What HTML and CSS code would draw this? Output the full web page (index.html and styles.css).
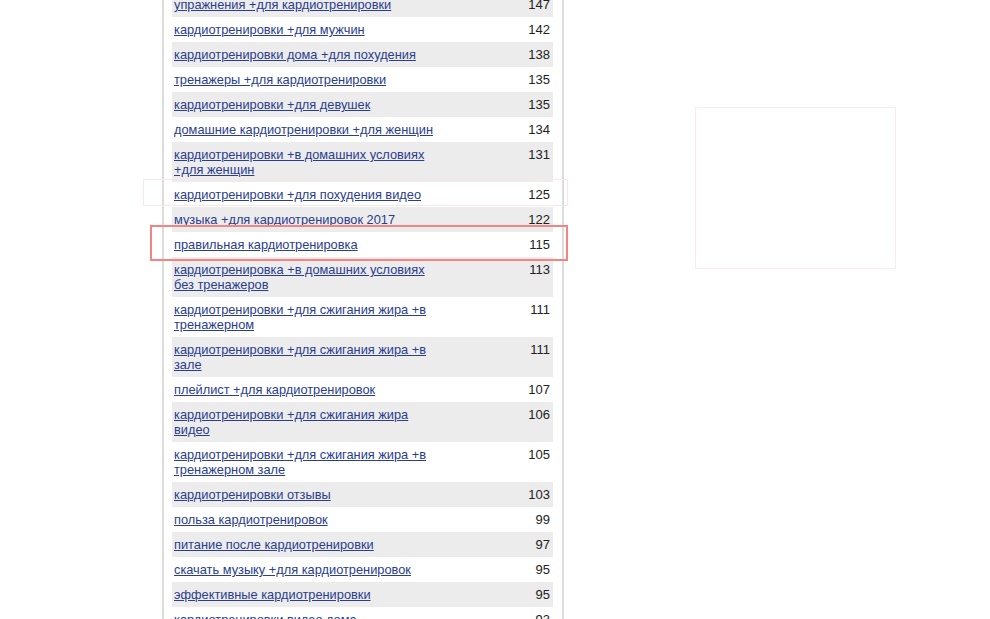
FILE: index.html
```html
<!DOCTYPE html>
<html lang="ru">
<head>
<meta charset="utf-8">
<link rel="stylesheet" href="styles.css">
</head>
<body>
<div class="panel">
  <table class="kw">
    <tbody>
      <tr><td class="q"><a href="#">упражнения +для кардиотренировки</a></td><td class="n">147</td></tr>
      <tr><td class="q"><a href="#">кардиотренировки +для мужчин</a></td><td class="n">142</td></tr>
      <tr><td class="q"><a href="#">кардиотренировки дома +для похудения</a></td><td class="n">138</td></tr>
      <tr><td class="q"><a href="#">тренажеры +для кардиотренировки</a></td><td class="n">135</td></tr>
      <tr><td class="q"><a href="#">кардиотренировки +для девушек</a></td><td class="n">135</td></tr>
      <tr><td class="q"><a href="#">домашние кардиотренировки +для женщин</a></td><td class="n">134</td></tr>
      <tr><td class="q"><a href="#">кардиотренировки +в домашних условиях +для женщин</a></td><td class="n">131</td></tr>
      <tr><td class="q"><a href="#">кардиотренировки +для похудения видео</a></td><td class="n">125</td></tr>
      <tr><td class="q"><a href="#">музыка +для кардиотренировок 2017</a></td><td class="n">122</td></tr>
      <tr><td class="q"><a href="#">правильная кардиотренировка</a></td><td class="n">115</td></tr>
      <tr><td class="q"><a href="#">кардиотренировка +в домашних условиях без тренажеров</a></td><td class="n">113</td></tr>
      <tr><td class="q"><a href="#">кардиотренировки +для сжигания жира +в тренажерном</a></td><td class="n">111</td></tr>
      <tr><td class="q"><a href="#">кардиотренировки +для сжигания жира +в зале</a></td><td class="n">111</td></tr>
      <tr><td class="q"><a href="#">плейлист +для кардиотренировок</a></td><td class="n">107</td></tr>
      <tr><td class="q"><a href="#">кардиотренировки +для сжигания жира видео</a></td><td class="n">106</td></tr>
      <tr><td class="q"><a href="#">кардиотренировки +для сжигания жира +в тренажерном зале</a></td><td class="n">105</td></tr>
      <tr><td class="q"><a href="#">кардиотренировки отзывы</a></td><td class="n">103</td></tr>
      <tr><td class="q"><a href="#">польза кардиотренировок</a></td><td class="n">99</td></tr>
      <tr><td class="q"><a href="#">питание после кардиотренировки</a></td><td class="n">97</td></tr>
      <tr><td class="q"><a href="#">скачать музыку +для кардиотренировок</a></td><td class="n">95</td></tr>
      <tr><td class="q"><a href="#">эффективные кардиотренировки</a></td><td class="n">95</td></tr>
      <tr><td class="q"><a href="#">кардиотренировки видео дома</a></td><td class="n">93</td></tr>
    </tbody>
  </table>
</div>
<div class="mark mark-faint"></div>
<div class="mark mark-red"></div>
<div class="mark mark-side"></div>
</body>
</html>
```
FILE: styles.css
```css
html, body {
  margin: 0;
  padding: 0;
  background: #ffffff;
  overflow: hidden;
  height: 619px;
}
body {
  font-family: "Liberation Sans", Arial, sans-serif;
  font-size: 12.8px;
  color: #222;
}
.panel {
  margin-left: 162px;
  width: 381px;
  padding: 0 9px 0 8px;
  border-left: 2px solid #dcdcdc;
  border-right: 2px solid #dcdcdc;
  height: 700px;
}
.kw {
  border-collapse: collapse;
  width: 381px;
  margin-top: -8px;
}
.kw td {
  padding: 5px 3px 5px 2px;
  line-height: 15px;
  vertical-align: top;
}
.kw tr:nth-child(odd) td {
  background: #ececec;
}
.kw .q {
  width: 266px;
}
.kw .q a {
  color: #2a3d8e;
  text-decoration: underline;
}
.kw .n {
  text-align: right;
  color: #222;
  font-size: 13px;
}
.mark {
  position: absolute;
  box-sizing: border-box;
  pointer-events: none;
}
.mark-faint {
  left: 143px;
  top: 179px;
  width: 425px;
  height: 27px;
  border: 1px solid #f9e6e6;
}
.mark-red {
  left: 150px;
  top: 225px;
  width: 418px;
  height: 36px;
  border: 2px solid #f48484;
}
.mark-side {
  left: 695px;
  top: 107px;
  width: 201px;
  height: 162px;
  border: 1px solid #fbeaea;
}
```
